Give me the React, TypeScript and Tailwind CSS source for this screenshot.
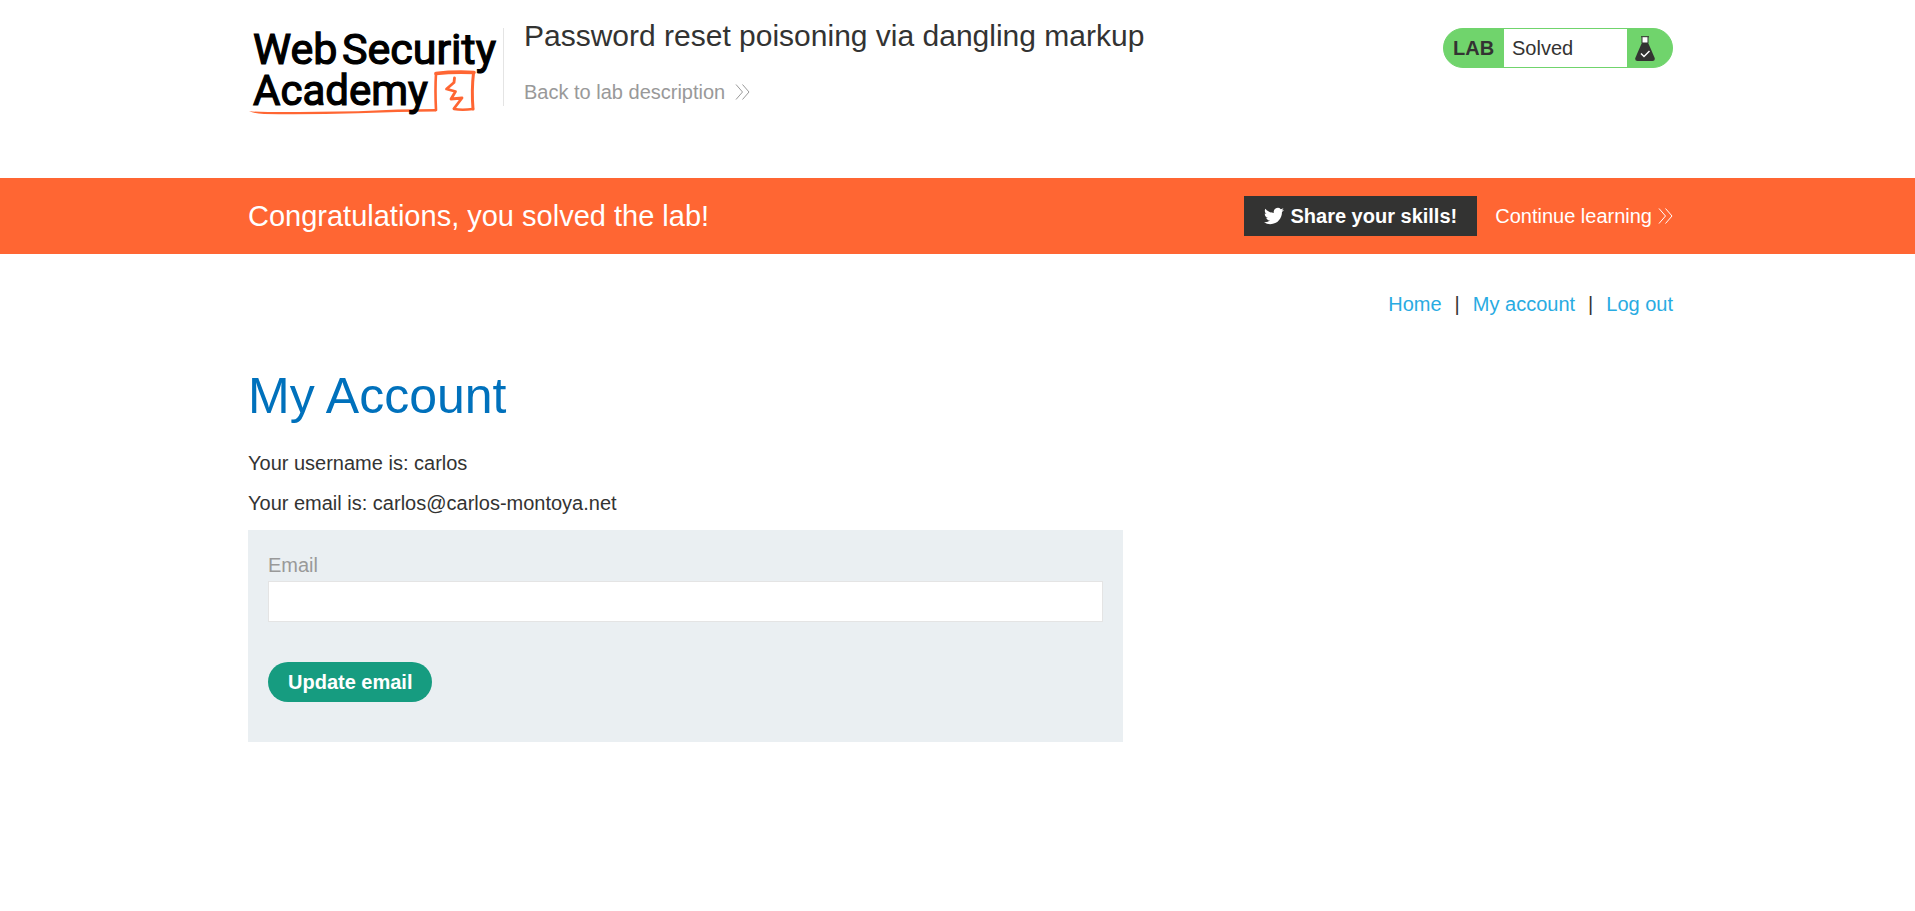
function Chevrons() {
  return (
    <svg viewBox="0 0 15 16" className="h-4 w-[15px]" fill="none" stroke="currentColor" strokeWidth="1" aria-hidden="true">
      <path d="M1 0.5 L7.500 8 L1 15.5 M7.500 0.5 L14 8 L7.500 15.5" />
    </svg>
  );
}

function Logo() {
  return (
    <svg viewBox="0 0 252 92" className="block h-[92px] w-[252px] overflow-visible" role="img" aria-label="Web Security Academy">
      <g fill="none" stroke="#ff6633" strokeLinecap="round" strokeLinejoin="round">
        <path d="M188 45.500 Q187 62 188 82" strokeWidth="2.6" />
        <path d="M188 45.500 Q206 43.500 226 44.500" strokeWidth="3.6" />
        <path d="M225.500 45 Q223.500 62 225 81" strokeWidth="3" />
        <path d="M225 81 Q214 82.500 206 81" strokeWidth="2.6" />
        <path d="M206.500 50 L206 54.500 L198.500 61 L207.500 63.500 L203 71 L214 70 L206 80.500" strokeWidth="2.800" />
      </g>
      <path d="M1 83 Q8 84 20 84 Q60 84.200 110 83.200 Q150 81 188 81 L188 83.500 Q150 83.500 110 85.200 Q60 86.800 16 86 Q6 85.500 1 83 Z" fill="#ff6633" />
      <g fill="#000" stroke="#000" strokeWidth="1.200" className="font-['Roboto',sans-serif]">
        <text x="5" y="36" fontSize="43">Web</text>
        <text x="94" y="36" fontSize="43">Security</text>
        <text x="5" y="77" fontSize="42">Academy</text>
      </g>
    </svg>
  );
}

function Flask() {
  return (
    <svg viewBox="0 0 20 25" className="h-[25px] w-5" aria-hidden="true">
      <rect x="7" y="1" width="6" height="7" fill="#fff" />
      <path d="M6 0.700 H14 M7 1 V7 M13 1 V7" stroke="#333332" strokeWidth="1" fill="none" />
      <path d="M7 6.500 H13 L19.700 22 Q20.300 25 17.500 25 H2.500 Q-0.300 25 0.300 22 Z" fill="#333332" />
      <path d="M6 17.500 L9 20.500 L14.500 15" stroke="#fff" strokeWidth="1.500" fill="none" />
    </svg>
  );
}

function Bird() {
  return (
    <svg viewBox="0 0 24 24" className="size-5" fill="currentColor" aria-hidden="true">
      <path d="M23.953 4.57a10 10 0 01-2.825.775 4.958 4.958 0 002.163-2.723c-.951.555-2.005.959-3.127 1.184a4.92 4.92 0 00-8.384 4.482C7.69 8.095 4.067 6.13 1.64 3.162a4.822 4.822 0 00-.666 2.475c0 1.71.87 3.213 2.188 4.096a4.904 4.904 0 01-2.228-.616v.06a4.923 4.923 0 003.946 4.827 4.996 4.996 0 01-2.212.085 4.936 4.936 0 004.604 3.417 9.867 9.867 0 01-6.102 2.105c-.39 0-.779-.023-1.17-.067a13.995 13.995 0 007.557 2.209c9.053 0 13.998-7.496 13.998-13.985 0-.21 0-.42-.015-.63A9.935 9.935 0 0024 4.59z" />
    </svg>
  );
}

export default function App() {
  return (
    <div className="min-h-screen bg-white font-['Liberation_Sans',Arial,sans-serif] text-xl leading-6 text-[#333332]">
      <header className="mx-auto flex max-w-[1431px] items-start pt-7 pb-[58px] pl-1.5">
        <Logo />
        <div className="ml-[3px] h-[78px] flex-1 border-l border-[#e4e4e4] pl-5">
          <h2 className="-mt-2 text-[30px] leading-8">Password reset poisoning via dangling markup</h2>
          <a href="#lab" className="mt-7 inline-flex items-center gap-2.5 text-[#999]">
            Back to lab description
            <Chevrons />
          </a>
        </div>
        <div className="flex h-10 w-[230px] items-stretch overflow-hidden rounded-full border border-[#70d46c] bg-[#70d46c]">
          <span className="flex w-[60px] items-center pl-[9px] font-bold">LAB</span>
          <p className="flex flex-1 items-center bg-white pl-2">Solved</p>
          <span className="flex w-[45px] items-center pl-2">
            <Flask />
          </span>
        </div>
      </header>

      <section className="bg-[#ff6633] text-white">
        <div className="mx-auto flex h-[76px] max-w-[1431px] items-center pl-1.5">
          <h4 className="flex-1 text-[29px] leading-8">Congratulations, you solved the lab!</h4>
          <button type="button" className="flex h-10 items-center gap-1.5 bg-[#333332] px-5 font-bold">
            <Bird />
            Share your skills!
          </button>
          <a href="#learn" className="ml-[18px] flex items-center gap-1.5">
            Continue learning
            <Chevrons />
          </a>
        </div>
      </section>

      <main className="mx-auto max-w-[1431px] pt-[38px] pl-1.5">
        <nav className="flex justify-end gap-[13px] text-[#29abe2]">
          <a href="#home">Home</a>
          <span className="text-[#333332]">|</span>
          <a href="#account">My account</a>
          <span className="text-[#333332]">|</span>
          <a href="#logout">Log out</a>
        </nav>
        <h1 className="mt-[50px] text-[50px] leading-[60px] text-[#0071bc]">My Account</h1>
        <p className="mt-[25px]">Your username is: carlos</p>
        <p className="mt-4">Your email is: carlos@carlos-montoya.net</p>
        <form className="mt-[15px] w-full max-w-[875px] bg-[#eaeff2] px-5 pt-[23px] pb-10" onSubmit={(e) => e.preventDefault()}>
          <label htmlFor="email" className="block text-[#999]">Email</label>
          <input id="email" type="email" className="mt-1 block h-[41px] w-full border border-[#e4e4e4] bg-white px-2 outline-none" />
          <button type="submit" className="mt-10 block h-10 rounded-full bg-[#169c80] px-5 font-bold text-white">
            Update email
          </button>
        </form>
      </main>
    </div>
  );
}
